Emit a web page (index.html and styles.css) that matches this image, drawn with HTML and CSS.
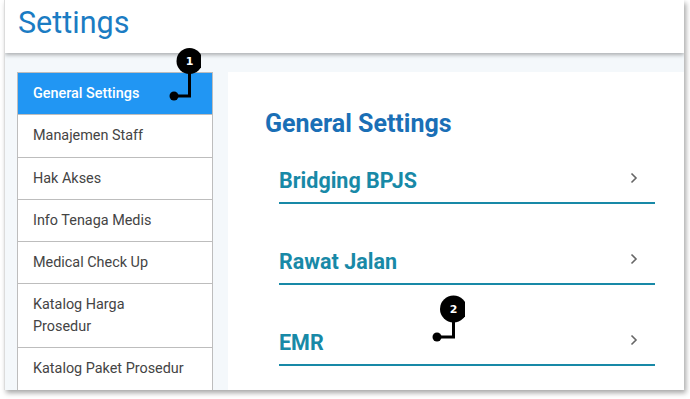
FILE: index.html
```html
<!DOCTYPE html>
<html>
<head>
<meta charset="utf-8">
<link rel="stylesheet" href="styles.css">
</head>
<body>
<div class="window">
  <header class="header"><h1 class="title">Settings</h1></header>
  <div class="body">
    <nav class="sidebar">
      <div class="nav-item active">General Settings</div>
      <div class="nav-item">Manajemen Staff</div>
      <div class="nav-item">Hak Akses</div>
      <div class="nav-item">Info Tenaga Medis</div>
      <div class="nav-item">Medical Check Up</div>
      <div class="nav-item">Katalog Harga<br>Prosedur</div>
      <div class="nav-item">Katalog Paket Prosedur</div>
    </nav>
    <main class="main">
      <h2 class="heading">General Settings</h2>
      <div class="list">
        <div class="row"><span class="row-label">Bridging BPJS</span><svg class="chev" width="8" height="12" viewBox="0 0 8 12"><path d="M1.5 1.5 L6 6 L1.5 10.5" fill="none" stroke="#666" stroke-width="1.6"/></svg></div>
        <div class="row"><span class="row-label">Rawat Jalan</span><svg class="chev" width="8" height="12" viewBox="0 0 8 12"><path d="M1.5 1.5 L6 6 L1.5 10.5" fill="none" stroke="#666" stroke-width="1.6"/></svg></div>
        <div class="row"><span class="row-label">EMR</span><svg class="chev" width="8" height="12" viewBox="0 0 8 12"><path d="M1.5 1.5 L6 6 L1.5 10.5" fill="none" stroke="#666" stroke-width="1.6"/></svg></div>
      </div>
    </main>
  </div>
  <div class="marker marker-1">
    <svg width="40" height="60" viewBox="0 0 40 60">
      <path d="M28.5 20 V49 H13" fill="none" stroke="#000" stroke-width="3"/>
      <circle cx="13" cy="49" r="4.5" fill="#000"/>
      <circle cx="28.5" cy="14" r="13" fill="#000"/>
      <text x="28.5" y="18" text-anchor="middle" class="marker-num">1</text>
    </svg>
  </div>
  <div class="marker marker-2">
    <svg width="40" height="60" viewBox="0 0 40 60">
      <path d="M28.5 20 V42 H12" fill="none" stroke="#000" stroke-width="3"/>
      <circle cx="12" cy="42" r="4.5" fill="#000"/>
      <circle cx="28.5" cy="14" r="13.5" fill="#000"/>
      <text x="28.5" y="18" text-anchor="middle" class="marker-num">2</text>
    </svg>
  </div>
</div>
</body>
</html>
```

FILE: styles.css
```css
* { box-sizing: border-box; }
html, body { margin: 0; padding: 0; background: #fff; }
body { font-family: Roboto, "Liberation Sans", sans-serif; width: 690px; height: 399px; overflow: hidden; }

.window {
  position: relative;
  margin-left: 4px;
  width: 680px;
  height: 390px;
  border-left: 1px solid #dcdcdc;
  box-shadow: 2px 3px 5px rgba(0,0,0,0.35);
  background: #f4f8fb;
  overflow: hidden;
}

.header {
  position: relative;
  z-index: 2;
  height: 53px;
  background: #fff;
  padding: 5px 0 0 13px;
  box-shadow: 0 2px 4px rgba(0,0,0,0.3);
}
.title {
  margin: 0;
  font-size: 30.5px;
  line-height: 36px;
  font-weight: 400;
  color: #1b7cc3;
}

.body {
  display: flex;
  gap: 15px;
  padding: 19px 0 0 12px;
  height: 337px;
}

.sidebar {
  flex: none;
  width: 196px;
  background: #fff;
  border: 1px solid #bdbdbd;
  border-bottom: none;
  overflow: hidden;
}
.nav-item {
  padding: 10px 20px 10px 15px;
  font-size: 14.4px;
  line-height: 21.3px;
  color: #444;
  border-bottom: 1px solid #bdbdbd;
  white-space: nowrap;
}
.nav-item:last-child { border-bottom: none; }
.nav-item.active {
  background: #2196f3;
  color: #fff;
  font-weight: 500;
}

.main {
  flex: 1;
  background: #fff;
  padding: 37.5px 29px 0 37px;
}
.heading {
  margin: 0 0 9px;
  font-size: 25px;
  line-height: 28px;
  font-weight: 700;
  color: #1a6fb6;
}
.list {
  display: flex;
  flex-direction: column;
  gap: 24px;
  margin-left: 14px;
}
.row {
  display: flex;
  align-items: center;
  justify-content: space-between;
  padding: 22px 17px 9px 0;
  border-bottom: 2px solid #1889a7;
}
.row-label {
  font-size: 21.5px;
  line-height: 24px;
  font-weight: 700;
  color: #1889a7;
}
.chev { display: block; margin-top: -6px; }

.marker { position: absolute; z-index: 5; }
.marker svg { display: block; }
.marker-1 { left: 156px; top: 47px; }
.marker-2 { left: 420px; top: 295px; }
.marker-num {
  font-family: "DejaVu Sans", sans-serif;
  font-size: 11px;
  font-weight: 700;
  fill: #fff;
}
```
